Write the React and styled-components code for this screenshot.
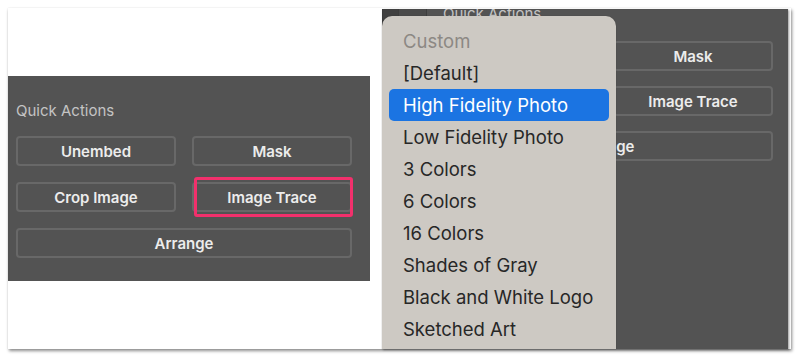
import styled, {createGlobalStyle} from 'styled-components';

const GlobalStyle = createGlobalStyle`
  body {
    margin: 0;
    background: #ffffff;
  }
`;

const menuItems = [
  'Custom',
  '[Default]',
  'High Fidelity Photo',
  'Low Fidelity Photo',
  '3 Colors',
  '6 Colors',
  '16 Colors',
  'Shades of Gray',
  'Black and White Logo',
  'Sketched Art',
];

export default function App() {
  return (
    <Page>
      <GlobalStyle />
      <Frame>
        <LeftShot>
          <Panel>
            <Heading>Quick Actions</Heading>
            <ButtonGrid>
              <ActionButton>Unembed</ActionButton>
              <ActionButton>Mask</ActionButton>
              <ActionButton>Crop Image</ActionButton>
              <ActionButton $marked>Image Trace</ActionButton>
              <ActionButton $wide>Arrange</ActionButton>
            </ButtonGrid>
          </Panel>
        </LeftShot>
        <RightShot>
          <DarkPanel>
            <TopRow>
              <Tab $shade="#404040" $width="15px" />
              <Tab $shade="#4a4a4a" $width="27px" />
              <ClippedHeading>Quick Actions</ClippedHeading>
            </TopRow>
            <RightGrid>
              <ActionButton>Unembed</ActionButton>
              <ActionButton>Mask</ActionButton>
              <ActionButton>Crop Image</ActionButton>
              <ActionButton>Image Trace</ActionButton>
              <ActionButton $wide>Arrange</ActionButton>
            </RightGrid>
          </DarkPanel>
          <Menu>
            {menuItems.map((item, i) => (
              <MenuItem key={item} $muted={i === 0} $active={i === 2}>
                {item}
              </MenuItem>
            ))}
          </Menu>
        </RightShot>
      </Frame>
    </Page>
  );
}

const Page = styled.div`
  padding: 8px;
  font-family: Inter, "Open Sans", sans-serif;
`;
const Frame = styled.div`
  display: flex;
  width: 783px;
  height: 341px;
  background: #ffffff;
  box-shadow: 1px 2px 3px rgba(0, 0, 0, 0.45), 0 0 1px rgba(0, 0, 0, 0.12);
`;
const LeftShot = styled.div`
  width: 374px;
  padding-top: 68px;
`;
const Panel = styled.div`
  width: 362px;
  height: 205px;
  box-sizing: border-box;
  background: #535353;
  padding: 25px 18px 0 8px;
`;
const Heading = styled.div`
  color: #c4c4c4;
  font-size: 15px;
  line-height: 20px;
  margin-bottom: 15px;
`;
const ButtonGrid = styled.div`
  display: grid;
  grid-template-columns: 160px 160px;
  grid-auto-rows: 30px;
  column-gap: 16px;
  row-gap: 16px;
`;
const ActionButton = styled.div`
  position: relative;
  grid-column: ${(p) => (p.$wide ? '1 / -1' : 'auto')};
  display: flex;
  align-items: center;
  justify-content: center;
  box-sizing: border-box;
  border: 2px solid #686868;
  border-radius: 4px;
  color: #ececec;
  font-size: 15px;
  font-weight: 600;
  &::after {
    content: '';
    display: ${(p) => (p.$marked ? 'block' : 'none')};
    position: absolute;
    inset: -7px -3px -7px 0;
    border: 3px solid #f2306c;
    border-radius: 3px;
  }
`;
const RightShot = styled.div`
  position: relative;
  flex: 1;
  display: flex;
  padding: 1px 3px 0 0;
`;
const DarkPanel = styled.div`
  flex: 1;
  background: #535353;
  overflow: hidden;
  box-shadow: 1px 1px 2px rgba(0, 0, 0, 0.4);
`;
const TopRow = styled.div`
  display: flex;
  height: 24px;
  border-left: 1px solid #3a3a3a;
`;
const Tab = styled.div`
  width: ${(p) => p.$width};
  background: ${(p) => p.$shade};
  border-right: 1px solid #3d3d3d;
`;
const ClippedHeading = styled.div`
  color: #c4c4c4;
  font-size: 15px;
  line-height: 14px;
  padding-left: 16px;
  margin-top: -2px;
`;
const RightGrid = styled.div`
  display: grid;
  grid-template-columns: 160px 160px;
  grid-auto-rows: 30px;
  column-gap: 16px;
  row-gap: 15px;
  padding: 8px 15px 0 55px;
`;
const Menu = styled.div`
  position: absolute;
  left: 0;
  top: 8px;
  bottom: 0;
  width: 234px;
  box-sizing: border-box;
  background: #cdc9c3;
  border-radius: 10px 10px 0 0;
  padding: 9px 7px 0;
  box-shadow: 0 0 1px rgba(0, 0, 0, 0.35);
`;
const MenuItem = styled.div`
  height: 32px;
  display: flex;
  align-items: center;
  padding-left: 14px;
  border-radius: 5px;
  font-size: 18.5px;
  color: ${(p) => (p.$muted ? '#8c8884' : p.$active ? '#ffffff' : '#272727')};
  background: ${(p) => (p.$active ? '#1b74e2' : 'transparent')};
`;
